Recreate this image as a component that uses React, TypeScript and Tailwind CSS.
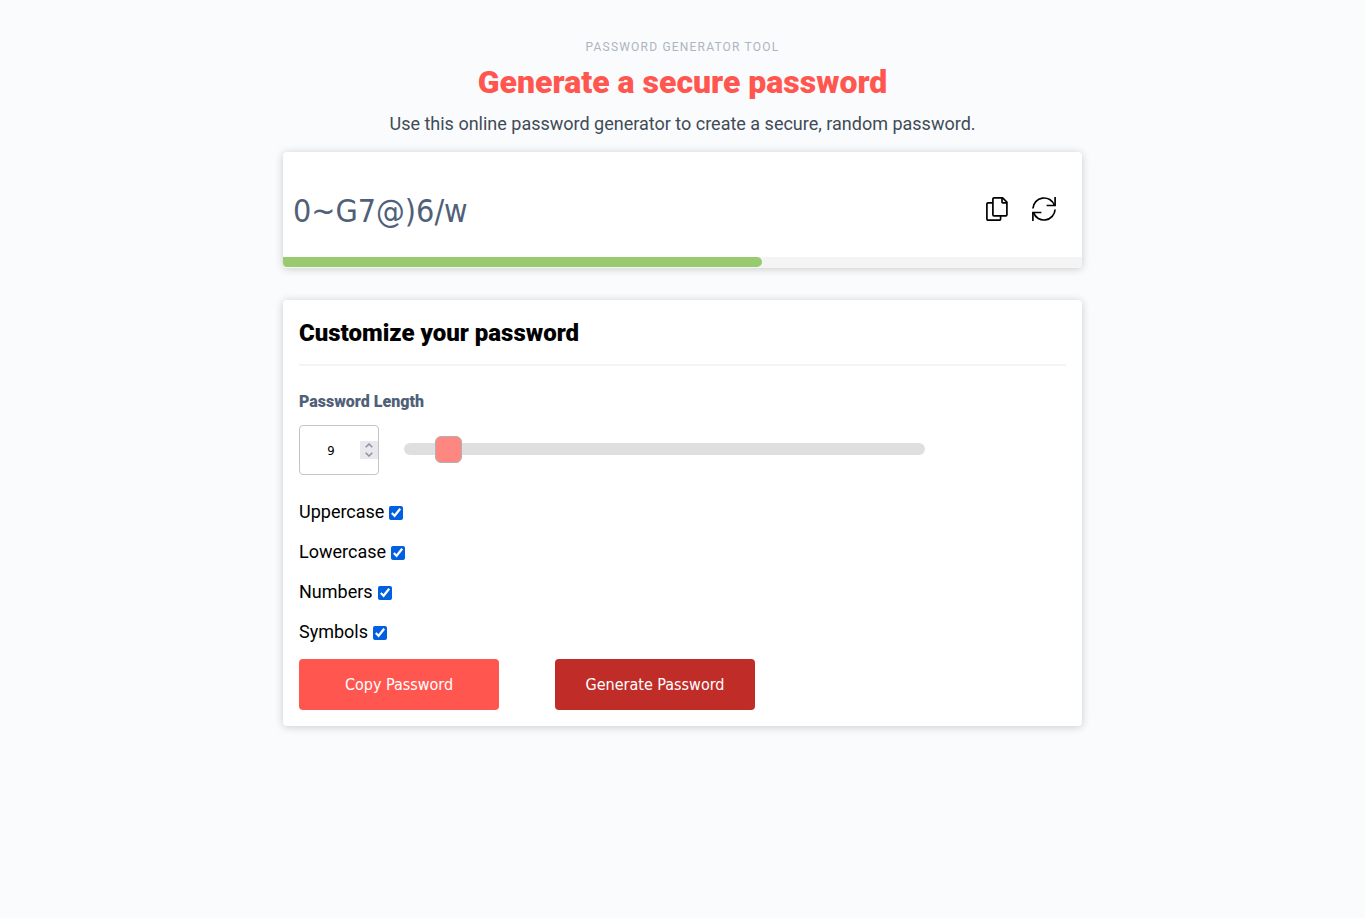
import { useState } from "react";

function CopyIcon() {
  return (
    <svg width="22" height="24" viewBox="0 0 22 24" fill="none" stroke="#000" strokeWidth="1.7" strokeLinejoin="round" aria-hidden="true">
      <path d="M6.800 5.800H2a1.100 1.100 0 0 0-1.100 1.100v15.200a1.100 1.100 0 0 0 1.100 1.100h11.500a1.100 1.100 0 0 0 1.100-1.100V18.800" />
      <path d="M8 .9h8.600L20.900 5.200v12.500a1.100 1.100 0 0 1-1.100 1.100H8a1.100 1.100 0 0 1-1.100-1.100V2A1.100 1.100 0 0 1 8 .9Z" />
      <path d="M16 1v3.900a.9.900 0 0 0 .9.900h3.900" />
    </svg>
  );
}

function RefreshIcon() {
  return (
    <svg width="24" height="24" viewBox="0 0 24 24" fill="none" stroke="#000" strokeWidth="1.7" aria-hidden="true">
      <path d="M.9 11.500A11.100 11.100 0 0 1 22.450 8.400" />
      <path d="M23.100 0v8.500h-8.500" />
      <path d="M23.100 12.500A11.100 11.100 0 0 1 1.550 15.600" />
      <path d="M.9 24v-8.500h8.500" />
    </svg>
  );
}

function Chevron({ up = false }: { up?: boolean }) {
  return (
    <svg width="8" height="5" viewBox="0 0 8 5" fill="none" stroke="#8f8f9d" strokeWidth="1.5" aria-hidden="true">
      <path d={up ? "M.7 4.300 4 1l3.300 3.300" : "M.7.7 4 4 7.300.7"} />
    </svg>
  );
}

const MIN_LENGTH = 1;
const MAX_LENGTH = 128;

const charsets: Record<string, string> = {
  Uppercase: "ABCDEFGHIJKLMNOPQRSTUVWXYZ",
  Lowercase: "abcdefghijklmnopqrstuvwxyz",
  Numbers: "0123456789",
  Symbols: "~!@#$%^&*()_+-=/?",
};
const options = Object.keys(charsets);

export default function App() {
  const [length, setLength] = useState(9);
  const [enabled, setEnabled] = useState<string[]>(options);
  const [password, setPassword] = useState("0~G7@)6/w");

  const toggle = (name: string) =>
    setEnabled((list) => (list.includes(name) ? list.filter((n) => n !== name) : [...list, name]));
  const changeLength = (value: number) => setLength(Math.min(MAX_LENGTH, Math.max(MIN_LENGTH, value)));
  const copy = () => navigator.clipboard?.writeText(password);
  const generate = () => {
    const pool = enabled.map((name) => charsets[name]).join("");
    if (!pool) return;
    setPassword(Array.from(crypto.getRandomValues(new Uint32Array(length)), (n) => pool[n % pool.length]).join(""));
  };

  return (
    <div className="min-h-screen bg-[#fafbfd] px-4 pt-9 pb-8 font-[Roboto,sans-serif] text-black">
      <main className="mx-auto max-w-[799px]">
        <header className="text-center">
          <p className="text-xs leading-[22px] tracking-widest text-[#adb5be] uppercase">Password Generator Tool</p>
          <h1 className="mt-1.5 text-[32px] leading-9 font-black text-[#ff564f]">Generate a secure password</h1>
          <p className="mt-3 text-lg leading-6 text-[#3f4b56]">Use this online password generator to create a secure, random password.</p>
        </header>

        <section className="mt-4 overflow-hidden rounded bg-white shadow-[0_1px_8px_rgba(0,0,0,0.2)]">
          <div className="flex min-h-[105px] items-center justify-between gap-4 pt-3 pr-[26px] pl-2.5">
            <output className="min-w-0 font-['DejaVu_Sans_Condensed',sans-serif] text-[32px] leading-10 break-all text-[#506078]">{password}</output>
            <div className="mb-[3px] flex gap-6">
              <button type="button" aria-label="Copy password" onClick={copy}><CopyIcon /></button>
              <button type="button" aria-label="Generate password" onClick={generate}><RefreshIcon /></button>
            </div>
          </div>
          <div className="h-[11px] bg-[#f4f4f4]">
            <div className="h-2.5 w-3/5 rounded-r-[5px] rounded-bl bg-[#98cb6f]" />
          </div>
        </section>

        <section className="mt-8 rounded bg-white p-4 shadow-[0_1px_8px_rgba(0,0,0,0.2)]">
          <h2 className="border-b-2 border-[#f4f4f4] pb-3.5 text-2xl leading-[34px] font-black">Customize your password</h2>
          <label htmlFor="length" className="mt-6 block text-base leading-6 font-black text-[#506078]">Password Length</label>
          <div className="mt-[11px] flex items-center">
            <div className="relative">
              <input
                id="length"
                type="number"
                min={MIN_LENGTH}
                max={MAX_LENGTH}
                value={length}
                onChange={(e) => changeLength(Number(e.target.value))}
                className="block h-[50px] w-20 [appearance:textfield] rounded border border-[#c4c4c8] pr-4 text-center font-['DejaVu_Sans_Condensed',sans-serif] text-[13px] [&::-webkit-inner-spin-button]:appearance-none"
              />
              <div className="absolute top-4 right-px flex h-[18px] w-[18px] flex-col bg-[#e9e9ed]">
                <button type="button" aria-label="Increase length" onClick={() => changeLength(length + 1)} className="flex h-[9px] items-center justify-center">
                  <Chevron up />
                </button>
                <button type="button" aria-label="Decrease length" onClick={() => changeLength(length - 1)} className="flex h-[9px] items-center justify-center">
                  <Chevron />
                </button>
              </div>
            </div>
            <input
              type="range"
              min={MIN_LENGTH}
              max={MAX_LENGTH}
              value={length}
              onChange={(e) => changeLength(Number(e.target.value))}
              aria-label="Password length slider"
              className="mr-[141px] mb-0.5 ml-[25px] h-3 min-w-0 flex-1 appearance-none rounded-md bg-[#dfdfdf] [&::-webkit-slider-thumb]:h-[27px] [&::-webkit-slider-thumb]:w-[27px] [&::-webkit-slider-thumb]:appearance-none [&::-webkit-slider-thumb]:rounded-md [&::-webkit-slider-thumb]:border [&::-webkit-slider-thumb]:border-[#b4b0b0] [&::-webkit-slider-thumb]:bg-[#ff8782]"
            />
          </div>
          <div className="mt-[25px] flex flex-col items-start gap-4">
            {options.map((name) => (
              <label key={name} className="flex items-center gap-[5px] text-lg leading-6">
                {name}
                <input type="checkbox" checked={enabled.includes(name)} onChange={() => toggle(name)} className="mt-0.5 size-3.5 accent-[#0060df]" />
              </label>
            ))}
          </div>
          <div className="mt-[15px] flex flex-wrap gap-x-14 gap-y-4 font-['DejaVu_Sans_Condensed',sans-serif] text-base text-white">
            <button type="button" onClick={copy} className="h-[51px] w-[200px] rounded bg-[#ff564f]">Copy Password</button>
            <button type="button" onClick={generate} className="h-[51px] w-[200px] rounded bg-[#c02c27]">Generate Password</button>
          </div>
        </section>
      </main>
    </div>
  );
}
